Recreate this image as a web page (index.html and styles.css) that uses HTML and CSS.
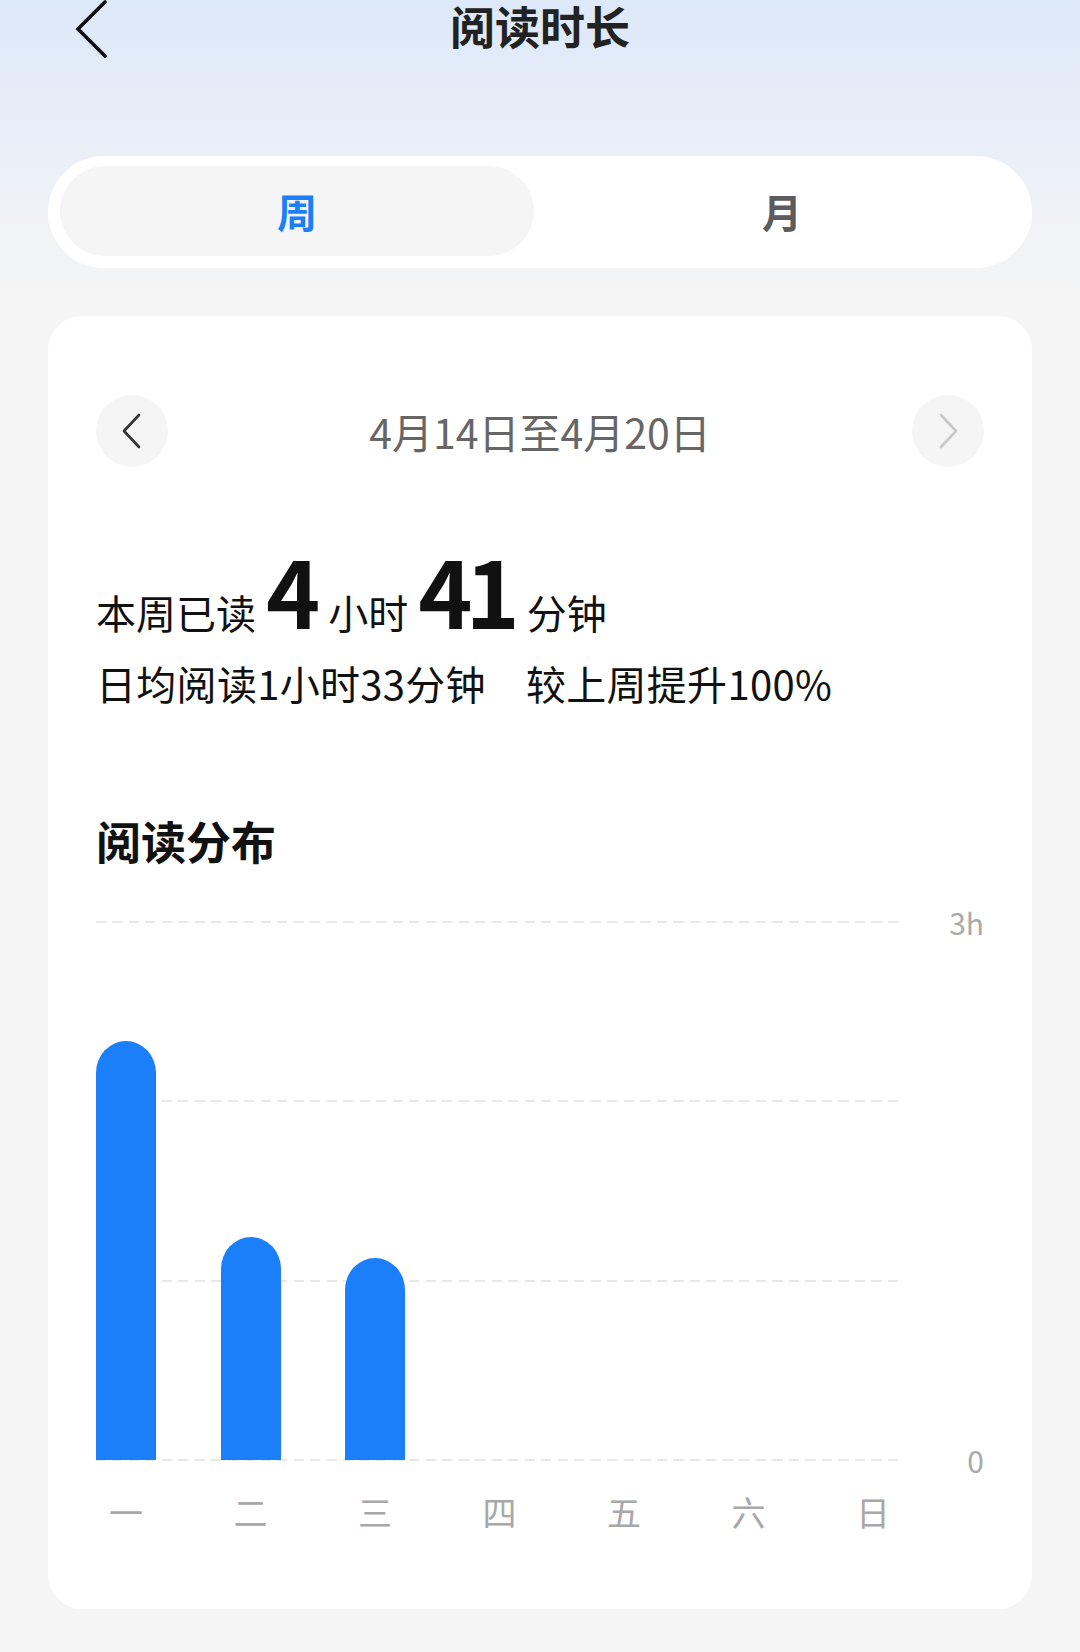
FILE: index.html
```html
<!DOCTYPE html>
<html lang="zh-CN">
<head>
<meta charset="utf-8">
<title>阅读时长</title>
<link rel="stylesheet" href="styles.css">
</head>
<body>
<div class="page">
  <header class="header">
    <div class="back">
      <svg width="34" height="58" viewBox="0 0 34 58"><path d="M31 2 L4 29 L31 56" fill="none" stroke="#111" stroke-width="3.6" stroke-linecap="round" stroke-linejoin="miter"/></svg>
    </div>
    <h1 class="title">阅读时长</h1>
    <div></div>
  </header>

  <div class="tabs">
    <div class="tab tab-active">周</div>
    <div class="tab tab-idle">月</div>
  </div>

  <section class="card">
    <div class="date-row">
      <div class="circle-btn">
        <svg width="20" height="36" viewBox="0 0 20 36"><path d="M17 2 L2 18 L17 34" fill="none" stroke="#333" stroke-width="2.6" stroke-linecap="round" stroke-linejoin="round"/></svg>
      </div>
      <div class="date-text">4月14日至4月20日</div>
      <div class="circle-btn">
        <svg width="20" height="36" viewBox="0 0 20 36"><path d="M3 2 L18 18 L3 34" fill="none" stroke="#c8c8c8" stroke-width="2.6" stroke-linecap="round" stroke-linejoin="round"/></svg>
      </div>
    </div>

    <div class="total">
      <span class="t-small">本周已读</span>
      <span class="t-big">4</span>
      <span class="t-small">小时</span>
      <span class="t-big t-pair">41</span>
      <span class="t-small">分钟</span>
    </div>
    <div class="avg">
      <span>日均阅读1小时33分钟</span>
      <span>较上周提升100%</span>
    </div>

    <h2 class="section-title">阅读分布</h2>

    <div class="chart">
      <div class="plot-row">
        <div class="plot">
          <div class="grid-lines">
            <div class="gridline"></div>
            <div class="gridline"></div>
            <div class="gridline"></div>
            <div class="gridline"></div>
          </div>
          <div class="bars">
            <div class="bar-slot"><div class="bar" style="height:77.78%"></div></div>
            <div class="bar-slot"><div class="bar" style="height:41.3%"></div></div>
            <div class="bar-slot"><div class="bar" style="height:37.4%"></div></div>
            <div class="bar-slot"></div>
            <div class="bar-slot"></div>
            <div class="bar-slot"></div>
            <div class="bar-slot"></div>
          </div>
        </div>
        <div class="axis">
          <span class="axis-label">3h</span>
          <span class="axis-label">0</span>
        </div>
      </div>
      <div class="days">
        <span class="day">一</span>
        <span class="day">二</span>
        <span class="day">三</span>
        <span class="day">四</span>
        <span class="day">五</span>
        <span class="day">六</span>
        <span class="day">日</span>
      </div>
    </div>
  </section>
</div>
</body>
</html>
```

FILE: styles.css
```css
* { box-sizing: border-box; }
html, body { margin: 0; padding: 0; }
body {
  width: 1080px;
  min-height: 1652px;
  font-family: "Noto Sans CJK SC", "Noto Sans", sans-serif;
  color: #222;
  background: linear-gradient(180deg, #dde8f8 0px, #e8eef8 130px, #f1f3f6 230px, #f5f5f5 300px, #f5f5f5 100%);
}
.page { width: 1080px; }

.header {
  height: 56px;
  display: grid;
  grid-template-columns: 1fr auto 1fr;
  align-items: start;
}
.back { padding-left: 74px; line-height: 0; }
.title {
  margin: 0;
  padding-top: 3px;
  font-size: 45px;
  line-height: 45px;
  font-weight: 700;
  color: #222;
}

.tabs {
  margin: 100px 48px 0;
  height: 112px;
  border-radius: 56px;
  background: #fff;
  padding: 10px 12px 12px;
  display: flex;
}
.tab {
  flex: 1;
  display: flex;
  align-items: center;
  justify-content: center;
  font-size: 40px;
  font-weight: 700;
  border-radius: 45px;
}
.tab-active {
  flex: 0 0 474px;
  background: #f5f5f5;
  color: #1a7ff9;
}
.tab-idle {
  color: #5c5c5c;
  padding-left: 10px;
}

.card {
  margin: 48px 48px 0;
  background: #fff;
  border-radius: 34px;
  padding: 79px 48px 80px;
}

.date-row {
  height: 72px;
  display: flex;
  align-items: center;
  justify-content: space-between;
}
.circle-btn {
  width: 72px;
  height: 72px;
  border-radius: 50%;
  background: #f5f5f5;
  display: flex;
  align-items: center;
  justify-content: center;
  line-height: 0;
}
.date-text {
  font-size: 41px;
  line-height: 68px;
  color: #666;
}

.total {
  margin-top: 76px;
  display: flex;
  align-items: baseline;
  line-height: 1;
  color: #111;
}
.t-small { font-size: 40px; }
.t-big {
  font-size: 92px;
  font-weight: 700;
  margin: 0 8px 0 10px;
}
.t-pair {
  letter-spacing: -7px;
  margin-right: 14px;
}

.avg {
  margin-top: 28px;
  font-size: 40px;
  line-height: 40px;
  color: #111;
  display: flex;
  gap: 40px;
  letter-spacing: 0.3px;
}

.section-title {
  margin: 115px 0 0;
  font-size: 45px;
  line-height: 45px;
  font-weight: 700;
  color: #111;
}

.chart { margin-top: 58px; }
.plot-row {
  display: grid;
  grid-template-columns: 807px 1fr;
}
.plot {
  display: grid;
  height: 540px;
}
.grid-lines, .bars { grid-area: 1 / 1; }
.grid-lines {
  display: flex;
  flex-direction: column;
  justify-content: space-between;
}
.gridline {
  height: 2px;
  background: repeating-linear-gradient(90deg, #e8e8e8 0 10px, transparent 10px 16.5px);
}
.bars {
  display: flex;
  gap: 64.5px;
  align-items: flex-end;
  padding-bottom: 1px;
}
.bar-slot {
  width: 60px;
  height: 100%;
  display: flex;
  align-items: flex-end;
}
.bar {
  width: 60px;
  background: #1a7ff9;
  border-radius: 30px 30px 0 0 / 32px 32px 0 0;
}
.axis {
  display: flex;
  flex-direction: column;
  justify-content: space-between;
  align-items: flex-end;
  padding: 1px 0;
}
.axis-label {
  font-size: 30px;
  line-height: 0;
  color: #aaa;
}

.days {
  margin-top: 34px;
  display: flex;
  gap: 64.5px;
}
.day {
  width: 60px;
  text-align: center;
  font-size: 34px;
  line-height: 34px;
  color: #a8a8a8;
}
```
